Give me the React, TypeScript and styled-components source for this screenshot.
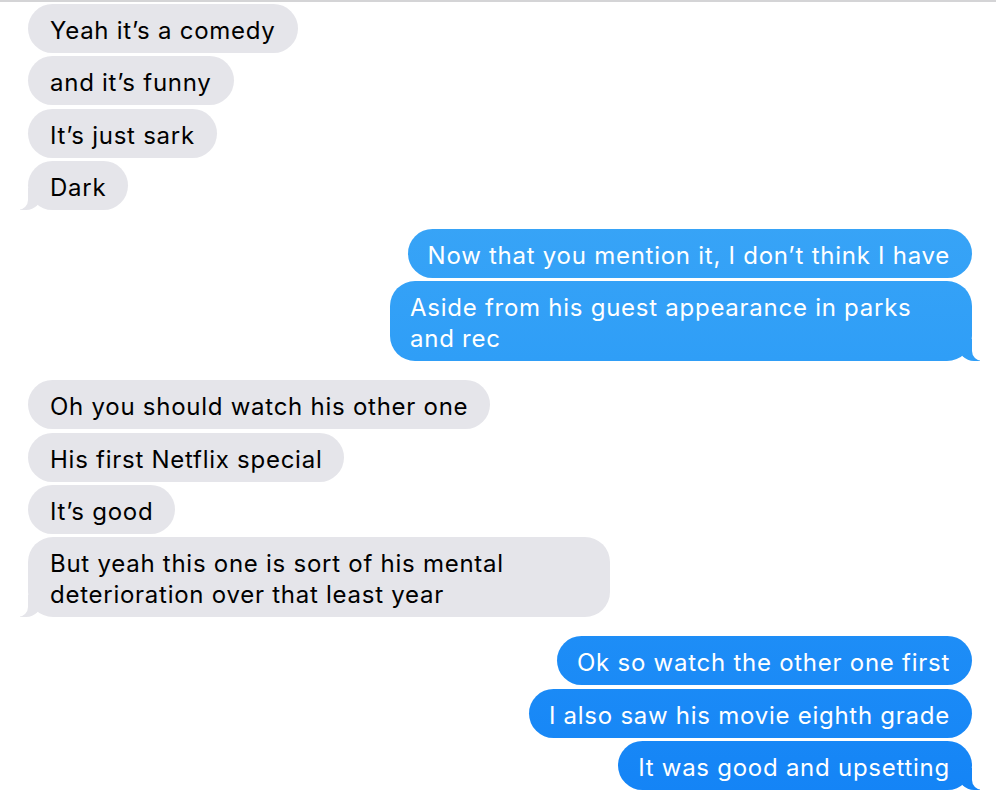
import React from "react";
import styled, { createGlobalStyle, css } from "styled-components";

const Global = createGlobalStyle`
  html, body { margin: 0; padding: 0; background: #ffffff; }
  body { font-family: Inter, "Noto Sans", sans-serif; -webkit-font-smoothing: antialiased; }
`;

const Screen = styled.div`
  width: 996px;
  height: 808px;
  overflow: hidden;
  border-top: 2px solid #d4d4d6;
  box-sizing: border-box;
  padding: 2px 24px 0 28px;
  display: flex;
  flex-direction: column;
  gap: 19px;
`;

const Group = styled.div<{ $me?: boolean }>`
  display: flex;
  flex-direction: column;
  align-items: ${(p) => (p.$me ? "flex-end" : "flex-start")};
  gap: 3.33px;
`;

const blueFill = css`
  background: linear-gradient(180deg, #45adf6 0px, #2f9ef7 360px, #1383f6 808px);
  background-attachment: fixed;
`;

const Bubble = styled.div<{ $me?: boolean; $tail?: boolean }>`
  position: relative;
  box-sizing: border-box;
  max-width: 582px;
  padding: 11px 22px 7px 22px;
  border-radius: 25px;
  font-size: 24px;
  line-height: 31px;
  letter-spacing: 0.74px;
  color: #000;
  background: #e5e5ea;
  ${(p) =>
    p.$me &&
    css`
      color: #fff;
      padding: 11px 22px 7px 20px;
      ${blueFill}
    `}
  ${(p) =>
    p.$tail &&
    !p.$me &&
    css`
      &::before {
        content: "";
        position: absolute;
        bottom: 0;
        left: -8px;
        width: 22px;
        height: 22px;
        background: #e5e5ea;
        border-bottom-right-radius: 16px;
      }
      &::after {
        content: "";
        position: absolute;
        bottom: 0;
        left: -12px;
        width: 12px;
        height: 22px;
        background: #fff;
        border-bottom-right-radius: 10px;
      }
    `}
  ${(p) =>
    p.$tail &&
    p.$me &&
    css`
      &::before {
        content: "";
        position: absolute;
        bottom: 0;
        right: -8px;
        width: 22px;
        height: 22px;
        ${blueFill}
        border-bottom-left-radius: 16px;
      }
      &::after {
        content: "";
        position: absolute;
        bottom: 0;
        right: -12px;
        width: 12px;
        height: 22px;
        background: #fff;
        border-bottom-left-radius: 10px;
      }
    `}
`;

const BubbleText = styled.span`
  position: relative;
  z-index: 1;
`;

type Msg = { text: string; tail?: boolean };

const groups: { me: boolean; msgs: Msg[] }[] = [
  {
    me: false,
    msgs: [
      { text: "Yeah it’s a comedy" },
      { text: "and it’s funny" },
      { text: "It’s just sark" },
      { text: "Dark", tail: true },
    ],
  },
  {
    me: true,
    msgs: [
      { text: "Now that you mention it, I don’t think I have" },
      { text: "Aside from his guest appearance in parks and rec", tail: true },
    ],
  },
  {
    me: false,
    msgs: [
      { text: "Oh you should watch his other one" },
      { text: "His first Netflix special" },
      { text: "It’s good" },
      { text: "But yeah this one is sort of his mental deterioration over that least year", tail: true },
    ],
  },
  {
    me: true,
    msgs: [
      { text: "Ok so watch the other one first" },
      { text: "I also saw his movie eighth grade" },
      { text: "It was good and upsetting", tail: true },
    ],
  },
];

export default function App() {
  return (
    <>
      <Global />
      <Screen>
        {groups.map((g, gi) => (
          <Group key={gi} $me={g.me}>
            {g.msgs.map((m, mi) => (
              <Bubble key={mi} $me={g.me} $tail={m.tail}>
                <BubbleText>{m.text}</BubbleText>
              </Bubble>
            ))}
          </Group>
        ))}
      </Screen>
    </>
  );
}
